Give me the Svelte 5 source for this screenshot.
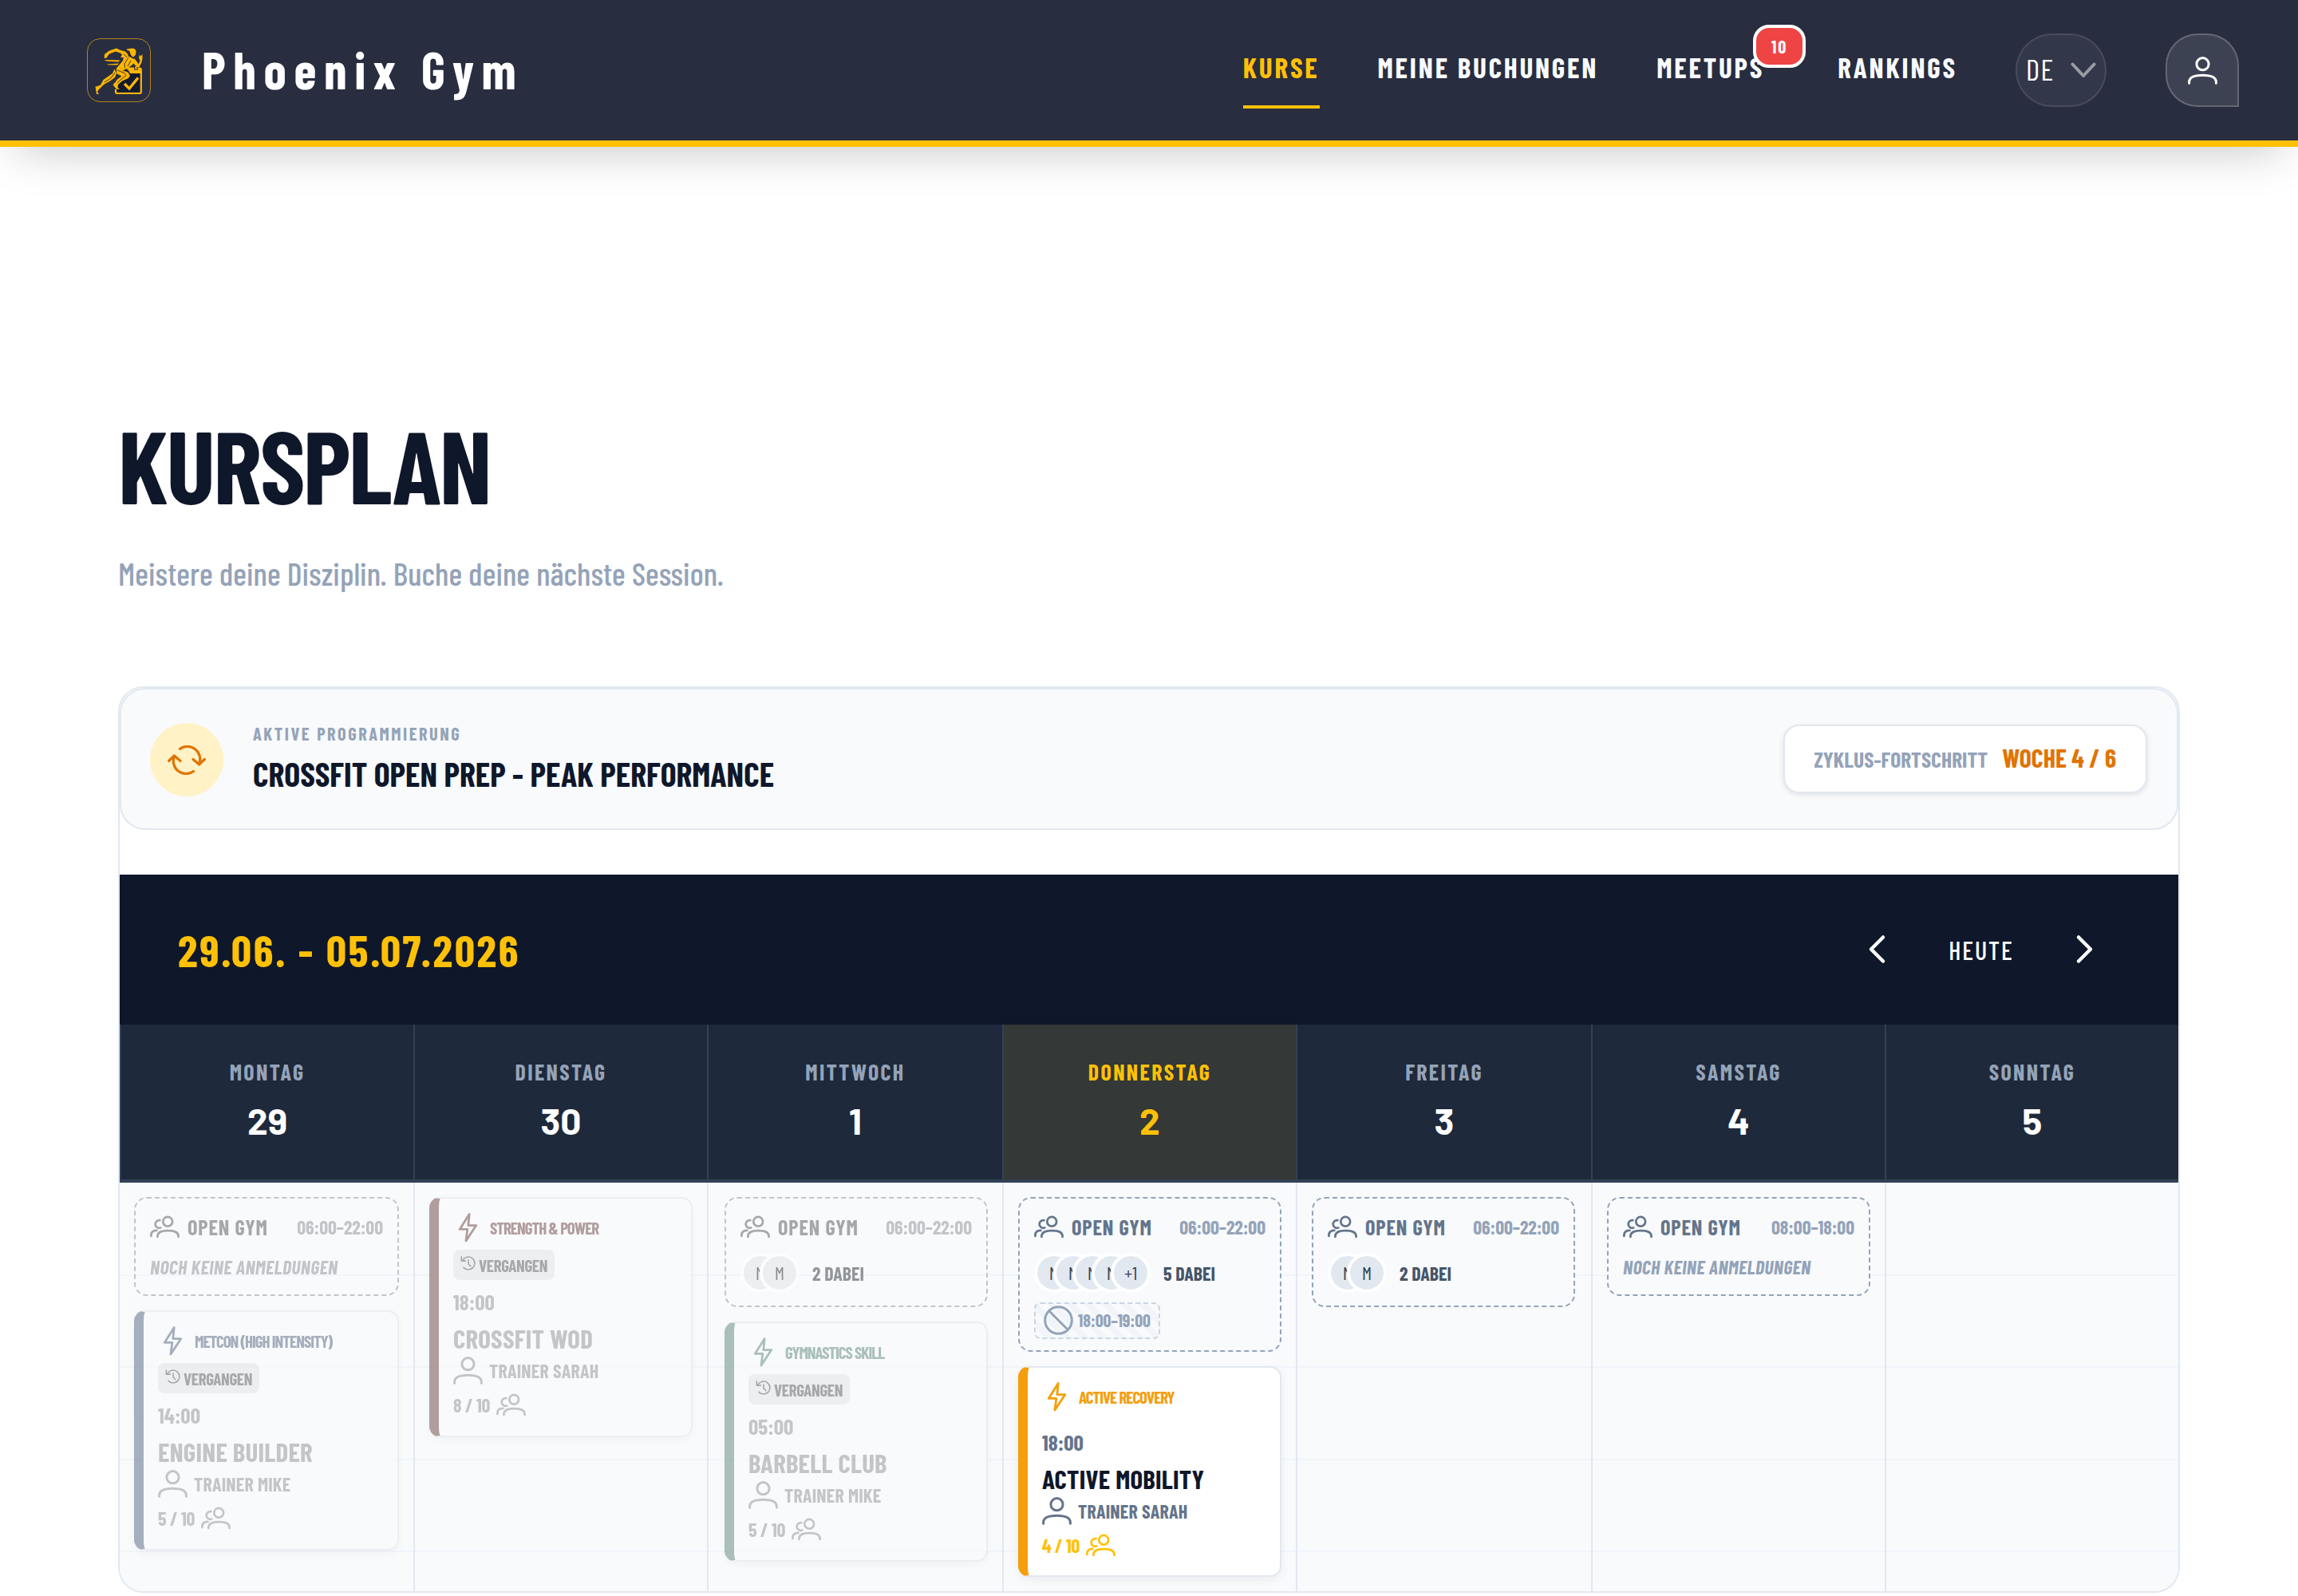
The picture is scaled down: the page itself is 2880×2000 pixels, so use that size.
<script>
  const days = [
    {
      name: 'Montag', date: 29, past: true,
      gym: { time: '06:00–22:00', people: [] },
      course: { type: 'Metcon (High Intensity)', color: '#3b82f6', time: '14:00', title: 'Engine Builder', trainer: 'Trainer Mike', count: '5 / 10' }
    },
    {
      name: 'Dienstag', date: 30, past: true,
      course: { type: 'Strength & Power', color: '#ef4444', time: '18:00', title: 'CrossFit WOD', trainer: 'Trainer Sarah', count: '8 / 10' }
    },
    {
      name: 'Mittwoch', date: 1, past: true,
      gym: { time: '06:00–22:00', people: ['M', 'M'], joined: 2 },
      course: { type: 'Gymnastics Skill', color: '#10b981', time: '05:00', title: 'Barbell Club', trainer: 'Trainer Mike', count: '5 / 10' }
    },
    {
      name: 'Donnerstag', date: 2, today: true,
      gym: { time: '06:00–22:00', people: ['M', 'M', 'M', 'M', '+1'], joined: 5, blocked: '18:00–19:00' },
      course: { type: 'Active Recovery', color: '#f59e0b', time: '18:00', title: 'Active Mobility', trainer: 'Trainer Sarah', count: '4 / 10' }
    },
    { name: 'Freitag', date: 3, gym: { time: '06:00–22:00', people: ['M', 'M'], joined: 2 } },
    { name: 'Samstag', date: 4, gym: { time: '08:00–18:00', people: [] } },
    { name: 'Sonntag', date: 5 }
  ];
</script>

{#snippet userIcon()}
  <svg class="icon" viewBox="0 0 37 37" stroke-width="3">
    <circle cx="18.5" cy="10.2" r="7.6" />
    <path d="M1.6 34.2v-1.3c0-6 5.6-8.7 16.9-8.7s16.9 2.7 16.9 8.7v1.3" />
  </svg>
{/snippet}

{#snippet usersIcon()}
  <svg class="icon" viewBox="0 0 37 37" stroke-width="2.7">
    <circle cx="22.2" cy="11.8" r="5.9" />
    <path d="M9.4 31v-.8c0-4.9 4-7 13.1-7s13.1 2.1 13.1 7v.8" />
    <path d="M12.4 10.2a4.9 4.9 0 1 0 .9 9.4" />
    <path d="M1.4 30v-1c0-3.8 2.2-6 7-6.1" />
  </svg>
{/snippet}

{#snippet boltIcon()}
  <svg class="icon" viewBox="0 0 37 37" stroke-width="2.8">
    <path d="M20.2 1.4 8.2 20.4h9.6L16 35l12.8-19.4h-10Z" />
  </svg>
{/snippet}

<header>
  <div class="logo-wrap">
    <svg class="logo" viewBox="0 0 80 80">
      <rect x=".5" y=".5" width="79" height="79" rx="16" stroke="#ffb600" stroke-opacity=".65" />
      <path d="M38 67V62L41 55L50 49L55 42H67V67Z" fill="#141b30" />
      <path d="M67.8 42V67Q67.8 69 66 69H38Q36 69 36 67V64" stroke="#ffb600" stroke-width="2.2" />
      <path d="M48 36.5H66Q68.9 36.5 68.9 39V44H54L52 40Z" fill="#ffb600" />
      <path d="M61.5 35V40" stroke="#282d40" stroke-width="4.4" />
      <path d="M61.5 35V39.5" stroke="#ffb600" stroke-width="2" />
      <path d="M47 57L53 63L64 49.5" stroke="#ffb600" stroke-width="3.4" />
      <g fill="#ffb600">
        <path d="M50 13.6L56 12.6Q61.5 12.6 61.5 17Q61.5 21.5 58 23.5Q54.5 22 53.5 16L50 14.8Z" />
        <path d="M52 21L48 16.5L42 15L37 12.5L28 15.5L22 20L21.5 24.5L24 25L28 19.5L36 16.5L42 18.5L44 20.5L42 24L48 24Z" />
        <path d="M56 24.5L60.5 27L57 33L51 37.5L44 40.5L36.5 38L40 34L45 28L46 23.5L51 22Z" />
        <path d="M59 25L62 28.5L64.5 32.5L66.5 28.5L65 24L66 20.5L67.5 22.5L69.5 20L69.5 25L68.5 30L65.5 36L63 36L57.5 31Z" />
        <path d="M37 37.5L44 40L51 42.5L54 46.5L52 50L44 53.5L39 58L38.5 61.5L41 64L36.5 63.5L32.5 58L35.5 55L38 51.5L43.5 47.5L37 44Z" />
        <path d="M34.5 38.5L37 44L35 49L29 53.5L21 58L15 64L13 67L15 70H12L10.5 60.5L13 60L17 58.5L20.5 52L27 47.5L32 44Z" />
        <path d="M22 27L41 27.5L40 29.5L24 28.6Z" />
        <path d="M25 32.5L40 31.5L38 33.5L26 33.2Z" />
      </g>
      <path d="M52 24L47 32L47.5 37M55 28L51 35M35 43L30 50L22 55M38 40L47 43.5L49 46.5L42 52L38 56M46 19.5L50 24" stroke="#282d40" stroke-width=".9" />
    </svg>
    <span class="brand">Phoenix Gym</span>
  </div>
  <nav class="nav">
    <a class="active" href="#kurse">KURSE</a>
    <a href="#buchungen">MEINE BUCHUNGEN</a>
    <a class="meetups" href="#meetups">MEETUPS<span class="badge">10</span></a>
    <a href="#rankings">RANKINGS</a>
    <button class="lang">
      <span>DE</span>
      <svg viewBox="0 0 32 20"><path d="M2.5 2.5 16 17 29.5 2.5" /></svg>
    </button>
    <button class="user" aria-label="Profil">{@render userIcon()}</button>
  </nav>
</header>

<main>
  <h1>KURSPLAN</h1>
  <p class="sub">Meistere deine Disziplin. Buche deine nächste Session.</p>

  <section class="calendar">
    <div class="banner">
      <div class="sync">
        <svg viewBox="0 0 48 37">
          <path d="M15.5 4.5A15.8 15.8 0 0 1 39.6 23" />
          <path d="M32 17.5 39.6 24 46.4 17.5" />
          <path d="M32.5 32.5A15.8 15.8 0 0 1 8.4 14" />
          <path d="M16 19.5 8.4 13 1.6 19.5" />
        </svg>
      </div>
      <div class="program">
        <div class="over">AKTIVE PROGRAMMIERUNG</div>
        <div class="prog">CROSSFIT OPEN PREP - PEAK PERFORMANCE</div>
      </div>
      <div class="cycle"><span>ZYKLUS-FORTSCHRITT</span><b>WOCHE 4 / 6</b></div>
    </div>

    <div class="bar">
      <div class="range">29.06. - 05.07.2026</div>
      <div class="controls">
        <button aria-label="Zurück"><svg viewBox="0 0 37 37"><path d="M26 3.5 11 18.5 26 33.5" /></svg></button>
        <button class="heute">HEUTE</button>
        <button aria-label="Weiter"><svg viewBox="0 0 37 37"><path d="M11 3.5 26 18.5 11 33.5" /></svg></button>
      </div>
    </div>

    <div class="cols heads">
      {#each days as day}
        <div class="dayhead" class:today={day.today}>
          <div class="name">{day.name}</div>
          <div class="num">{day.date}</div>
        </div>
      {/each}
    </div>

    <div class="grid">
      <div class="lines">
        {#each Array(5) as _}<i></i>{/each}
      </div>
      <div class="cols body">
        {#each days as day}
          <div class="day">
            {#if day.gym}
              <article class="gym" class:past={day.past}>
                <div class="gym-head">
                  {@render usersIcon()}
                  <span class="gym-name">Open Gym</span>
                  <span class="gym-time">{day.gym.time}</span>
                </div>
                {#if day.gym.people.length}
                  <div class="people">
                    {#each day.gym.people as p}<span class="avatar">{p}</span>{/each}
                    <span class="joined">{day.gym.joined} dabei</span>
                  </div>
                {:else}
                  <div class="none">Noch keine Anmeldungen</div>
                {/if}
                {#if day.gym.blocked}
                  <div class="blocked">
                    <svg class="icon" viewBox="0 0 37 37" stroke-width="3"><circle cx="18.5" cy="18.5" r="16.8" /><path d="M6.8 6.8 30.2 30.2" /></svg>
                    <span>{day.gym.blocked}</span>
                  </div>
                {/if}
              </article>
            {/if}
            {#if day.course}
              <article class="card" class:past={day.past} style:--accent={day.course.color}>
                <div class="type">{@render boltIcon()}<span>{day.course.type}</span></div>
                {#if day.past}
                  <div class="tag">
                    <svg viewBox="0 0 20 20"><path d="M3.2 5.2a8.4 8.4 0 1 1 1 9.9M1.4 1v5.4h5.4M10.6 5.4v5l3 3" /></svg>
                    <span>Vergangen</span>
                  </div>
                {/if}
                <div class="time">{day.course.time}</div>
                <div class="title">{day.course.title}</div>
                <div class="trainer">{@render userIcon()}<span>{day.course.trainer}</span></div>
                <div class="count"><span>{day.course.count}</span>{@render usersIcon()}</div>
              </article>
            {/if}
          </div>
        {/each}
      </div>
    </div>
  </section>
</main>

<style>
  :global(body) {
    background: #fff;
    font-family: 'Barlow Condensed', 'Roboto Condensed', sans-serif;
    color: #0f172a;
  }
  * { box-sizing: border-box; }
  button { font: inherit; color: inherit; background: none; border: none; padding: 0; margin: 0; }
  svg { fill: none; stroke: currentColor; stroke-linecap: round; stroke-linejoin: round; flex: none; }
  .icon { width: 37px; height: 37px; }

  header {
    position: relative;
    height: 184px;
    background: #282d40;
    border-bottom: 8px solid #ffc107;
    box-shadow: 0 20px 60px -20px rgba(0, 0, 0, 0.26);
    display: flex;
    justify-content: space-between;
    align-items: center;
    padding: 0 74px 0 109px;
  }
  .logo-wrap { display: flex; align-items: center; gap: 64px; }
  .logo { width: 80px; height: 80px; stroke: none; stroke-linecap: butt; stroke-linejoin: miter; }
  .brand { color: #fff; font-size: 64px; line-height: 77px; font-weight: 700; letter-spacing: 9.6px; margin-top: -3px; }
  .nav { display: flex; align-items: center; gap: 73px; }
  .nav a {
    position: relative;
    display: flex;
    align-items: center;
    height: 96px;
    padding-bottom: 4px;
    border-bottom: 4px solid transparent;
    color: #f8fafc;
    font-size: 35.2px;
    font-weight: 700;
    letter-spacing: 2.816px;
    text-decoration: none;
  }
  .nav a.active { color: #ffc107; border-color: #ffc107; }
  .nav a.meetups { margin-right: 19px; }
  .badge {
    position: absolute;
    top: -9px;
    right: -52px;
    width: 66px;
    height: 54px;
    border: 4px solid #fff;
    border-radius: 20px;
    background: #ef4444;
    color: #fff;
    font-size: 22.4px;
    letter-spacing: 1.8px;
    line-height: 47px;
    text-align: center;
  }
  .lang {
    display: flex;
    align-items: center;
    justify-content: space-between;
    width: 114px;
    height: 92px;
    padding: 0 11px;
    border: 2px solid rgba(255, 255, 255, 0.1);
    border-radius: 46px;
    background: rgba(255, 255, 255, 0.05);
    color: #fff;
    font-size: 37px;
    letter-spacing: 1.5px;
  }
  .lang span { margin-top: -5px; }
  .lang svg { width: 32px; height: 20px; stroke: #9a9ca5; stroke-width: 4; }
  .user {
    display: flex;
    align-items: center;
    justify-content: center;
    width: 92px;
    height: 92px;
    margin-left: 1px;
    border: 2px solid rgba(255, 255, 255, 0.2);
    border-radius: 40px 40px 0 40px;
    background: rgba(255, 255, 255, 0.1);
    color: #fff;
  }

  main { padding: 333px 148px 4px; }
  h1 { margin: 0 0 43px; font-size: 128px; line-height: 128px; font-weight: 700; letter-spacing: -2.35px; }
  .sub { margin: 0 0 112px; font-size: 40px; line-height: 60px; font-weight: 500; letter-spacing: 0.08px; color: #94a3b8; }

  .calendar { border: 2px solid #e2e8f0; border-radius: 32px; background: #fff; overflow: hidden; }
  .banner {
    display: flex;
    align-items: center;
    gap: 37px;
    height: 178px;
    margin-bottom: 56px;
    padding: 0 37px 0 36px;
    border: 2px solid #e2e8f0;
    border-radius: 32px;
    background: #f8fafc;
  }
  .sync { display: flex; align-items: center; justify-content: center; width: 92px; height: 92px; margin-top: 2px; border-radius: 50%; background: #fff2c6; color: #e07402; }
  .sync svg { width: 48px; height: 37px; stroke-width: 3.2; }
  .program { flex: 1; margin-top: -3px; }
  .over { font-size: 22.4px; line-height: 28px; font-weight: 700; letter-spacing: 2.5px; color: #94a3b8; margin-bottom: 11px; }
  .prog { font-size: 42px; line-height: 50px; font-weight: 700; }
  .cycle {
    display: flex;
    align-items: baseline;
    gap: 18px;
    height: 86px;
    padding: 19px 37px;
    border: 2px solid #e2e8f0;
    border-radius: 20px;
    background: #fff;
    box-shadow: 0 2px 6px rgba(0, 0, 0, 0.1);
    line-height: 40px;
  }
  .cycle span { font-size: 27.5px; font-weight: 700; color: #94a3b8; }
  .cycle b { font-size: 32px; font-weight: 700; color: #e07402; }

  .bar { display: flex; align-items: center; justify-content: space-between; height: 188px; padding: 0 72px; background: #0f172a; }
  .range { margin: -2px 0 0 1px; font-size: 56px; font-weight: 700; letter-spacing: 2.6px; color: #ffc107; }
  .controls { display: flex; align-items: center; margin-top: -1px; color: #fff; }
  .controls button { display: flex; align-items: center; justify-content: center; width: 92px; height: 92px; }
  .controls button.heute { width: 168px; padding-left: 2px; font-size: 32px; font-weight: 500; letter-spacing: 1.9px; }
  .controls svg { width: 37px; height: 37px; stroke-width: 4.5; }

  .cols { display: grid; grid-template-columns: 370px 368px 370px 368px 370px 368px 1fr; }
  .heads { background: #1e293b; border-bottom: 4px solid #334155; }
  .dayhead { height: 194px; padding-top: 41px; text-align: center; border-right: 2px solid #334155; }
  .dayhead:first-child { border-left: 2px solid #334155; }
  .dayhead:last-child { border-right: none; }
  .name { margin-bottom: 15px; font-size: 28px; line-height: 36px; font-weight: 700; letter-spacing: 2.35px; text-transform: uppercase; color: #94a3b8; }
  .num { font-family: 'Barlow', sans-serif; font-size: 46px; line-height: 56px; font-weight: 700; color: #fff; }
  .today { background: rgba(255, 193, 7, 0.1); }
  .today .name, .today .num { color: #ffc107; }

  .grid { position: relative; height: 512px; background: #f8fafc; overflow: hidden; }
  .lines { position: absolute; inset: 0; }
  .lines i { display: block; height: 115.2px; border-top: 2px solid #f1f5fb; }
  .body { position: relative; height: 100%; }
  .day { display: flex; flex-direction: column; gap: 18px; padding: 18px; border-right: 2px solid #e2e8f0; }
  .day:nth-child(3) { padding-left: 20px; }
  .day:nth-child(5) { padding-right: 20px; }
  .day:last-child { border-right: none; }
  .past { opacity: 0.6; filter: grayscale(0.8); }

  .gym { padding: 16px 18px; border: 2px dashed #94a3b8; border-radius: 16px; background: #f8fafc; text-transform: uppercase; font-weight: 700; }
  .gym.past { background: none; }
  .gym-head { display: flex; align-items: center; height: 38px; margin-bottom: 14px; color: #64748b; }
  .gym-name { margin-left: 10px; font-size: 26.4px; letter-spacing: 0.85px; }
  .gym-time { margin-left: auto; font-size: 24px; letter-spacing: -0.05px; color: #94a3b8; }
  .none { font-size: 24px; line-height: 36px; font-style: italic; letter-spacing: 0.4px; color: #94a3b8; }
  .people { display: flex; align-items: center; height: 50px; }
  .avatar {
    width: 50px;
    height: 50px;
    border: 4px solid #fff;
    border-radius: 50%;
    background: #e2e8f0;
    color: #334155;
    font-size: 23px;
    font-weight: 400;
    line-height: 42px;
    text-align: center;
  }
  .avatar + .avatar { margin-left: -26px; }
  .joined { margin-left: 16px; font-size: 24px; color: #475569; }
  .blocked {
    display: flex;
    align-items: center;
    gap: 6px;
    width: 158px;
    height: 46px;
    margin: 12px 0 -2px;
    padding: 0 10px;
    border: 2px dashed #cbd5e1;
    border-radius: 8px;
    background: repeating-linear-gradient(45deg, #f8fafc, #f8fafc 8px, #f1f5f9 8px, #f1f5f9 16px);
    color: #94a3b8;
    font-size: 22px;
    letter-spacing: -0.1px;
    white-space: nowrap;
  }
  .blocked .icon { margin-top: -2px; }
  .blocked span { margin-top: -3px; }

  .card {
    padding: 18px 18px 19px;
    border: 2px solid #e2e8f0;
    border-left: 12px solid var(--accent);
    border-radius: 14px;
    background: #fff;
    box-shadow: 0 4px 12px rgba(0, 0, 0, 0.06);
    text-transform: uppercase;
    font-weight: 700;
    color: #64748b;
  }
  .card.past { padding-bottom: 20px; background: #f9fbfe; color: #9ca3af; }
  .type { display: flex; align-items: center; gap: 9px; height: 38px; color: var(--accent); font-size: 21px; letter-spacing: -1.05px; }
  .type .icon { margin-top: -1px; }
  .type span { margin-top: -2px; }
  .tag {
    display: flex;
    align-items: center;
    gap: 4px;
    width: 127px;
    height: 38px;
    margin: 8px 0 -10px;
    padding-left: 9px;
    border-radius: 8px;
    background: #e5e7eb;
    color: #6b7280;
    font-size: 21px;
    letter-spacing: -0.4px;
  }
  .tag svg { width: 19px; height: 19px; margin-top: -4px; stroke-width: 1.7; }
  .time { margin-top: 19px; font-size: 27.2px; line-height: 36px; }
  .title { margin-top: 8px; font-size: 33px; line-height: 40px; letter-spacing: 0.2px; color: #0f172a; }
  .past .title { color: #9ca3af; }
  .trainer { display: flex; align-items: center; gap: 8px; height: 38px; margin-top: 1px; font-size: 24px; letter-spacing: 0.15px; }
  .count { display: flex; align-items: center; gap: 8px; height: 38px; margin-top: 5px; font-size: 24px; letter-spacing: -0.3px; color: #ffc107; }
  .past .count { color: #9ca3af; }
</style>
